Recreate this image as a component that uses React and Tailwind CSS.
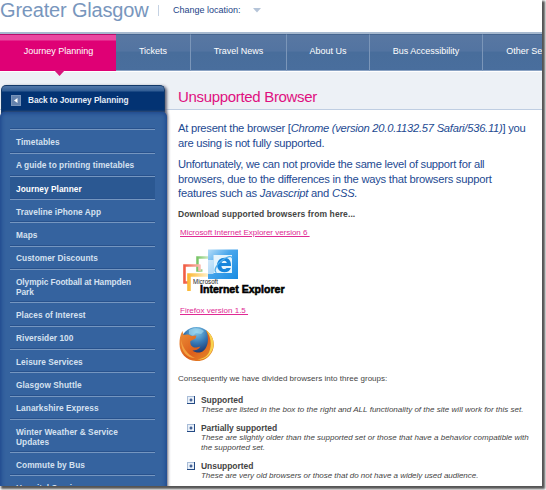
import React from "react";

const navItems = [
  { label: "Tickets", cls: "w-[75px]" },
  { label: "Travel News", cls: "w-[96px]" },
  { label: "About Us", cls: "w-[83px]" },
  { label: "Bus Accessibility", cls: "w-[113px]" },
  { label: "Other Services", cls: "w-[107px]" },
];

const sideItems = [
  ["Timetables"],
  ["A guide to printing timetables"],
  ["Journey Planner"],
  ["Traveline iPhone App"],
  ["Maps"],
  ["Customer Discounts"],
  ["Olympic Football at Hampden", "Park"],
  ["Places of Interest"],
  ["Riversider 100"],
  ["Leisure Services"],
  ["Glasgow Shuttle"],
  ["Lanarkshire Express"],
  ["Winter Weather & Service", "Updates"],
  ["Commute by Bus"],
  ["Hospital Services"],
];

const groups = [
  { title: "Supported", cls: "tracking-[0.020px]", lines: ["These are listed in the box to the right and ALL functionality of the site will work for this set."] },
  { title: "Partially supported", cls: "", lines: ["These are slightly older than the supported set or those that have a behavior compatible with", "the supported set."] },
  { title: "Unsupported", cls: "tracking-[-0.025px]", lines: ["These are very old browsers or those that do not have a widely used audience."] },
];

function ExplorerLogo() {
  return (
    <svg className="block h-[48px] w-[108px]" viewBox="0 0 108 48">
      <defs>
        <linearGradient id="ieBlue" x1="0" x2="1" y1="0" y2="1">
          <stop offset="0" stopColor="#b5ddf8" />
          <stop offset="0.4" stopColor="#4aa7ec" />
          <stop offset="1" stopColor="#188be2" />
        </linearGradient>
        <linearGradient id="ieYellow" gradientUnits="userSpaceOnUse" x1="7" x2="29" y1="0" y2="0">
          <stop offset="0" stopColor="#fbb62c" />
          <stop offset="1" stopColor="#fff3cf" />
        </linearGradient>
        <linearGradient id="ieRed" gradientUnits="userSpaceOnUse" x1="3" x2="21" y1="0" y2="0">
          <stop offset="0" stopColor="#f0553c" />
          <stop offset="1" stopColor="#fac4b8" />
        </linearGradient>
        <linearGradient id="ieGreen" gradientUnits="userSpaceOnUse" x1="16" x2="29" y1="0" y2="0">
          <stop offset="0" stopColor="#6fc05c" />
          <stop offset="1" stopColor="#d3edca" />
        </linearGradient>
      </defs>
      <path d="M28 9.500H17.500V22.500h5" fill="none" stroke="url(#ieGreen)" strokeWidth="2.500" />
      <path d="M20.500 17.500H4.500V34.500h4M19.500 17v6" fill="none" stroke="url(#ieRed)" strokeWidth="2.600" />
      <path d="M9 43V27h19" fill="none" stroke="url(#ieYellow)" strokeWidth="3.600" />
      <path d="M28 1.500h30v29.500H28z" fill="url(#ieBlue)" />
      <path d="M33.500 7h18.500v18H33.500z" fill="#e4f4fd" />
      <path d="M27.500 12h6v14h-6z" fill="#fff" opacity=".6" />
      <path d="M51 17.300c0-4.800-2.600-7.500-6.600-7.500-4.200 0-7.300 3.100-7.300 7.300s2.900 7.200 7.200 7.200c3.400 0 5.700-1.600 6.500-4.300h-4.200c-.5.700-1.200 1.100-2.200 1.100-1.800 0-2.900-1.200-3-3.100H51zm-9.500-2.200c.3-1.500 1.300-2.400 2.800-2.400s2.400.9 2.500 2.400z" fill="#1685dc" />
      <path d="M36.500 24.500c-3.500-1 0-8.500 6-12.500 5-3.700 9.500-4.700 9.500-1.700" fill="none" stroke="#53aeea" strokeWidth="1.300" />
      <text x="13" y="36" className="fill-[#222] font-['Liberation_Sans'] text-[6.500px]" textLength="25" lengthAdjust="spacingAndGlyphs">Microsoft</text>
      <text x="20" y="44.500" className="fill-black stroke-black font-['Liberation_Sans'] text-[11.500px] font-bold" strokeWidth=".6" textLength="84.500" lengthAdjust="spacingAndGlyphs">Internet Explorer</text>
    </svg>
  );
}

function FirefoxLogo() {
  return (
    <svg className="block h-[36px] w-[37px]" viewBox="0 0 37 36">
      <defs>
        <radialGradient id="globe" cx=".5" cy=".15" r=".7">
          <stop offset="0" stopColor="#83cbec" />
          <stop offset=".5" stopColor="#3678b4" />
          <stop offset="1" stopColor="#182f68" />
        </radialGradient>
        <linearGradient id="fox" x1="0" x2="1" y1="0" y2="1">
          <stop offset="0" stopColor="#ed9138" />
          <stop offset=".55" stopColor="#dc5f1c" />
          <stop offset="1" stopColor="#e9932c" />
        </linearGradient>
      </defs>
      <circle cx="18.500" cy="17" r="16" fill="url(#globe)" />
      <path d="M11 4c5-3 12-2 15 1l-3 3-5-1-3 3-4-2z" fill="#a6dcf1" opacity=".6" />
      <path d="M28 4c7 5 10 14 6 22-4 7-10 9.500-16 9C8 34.500 1.500 27 1.500 18c0-5 .5-9 3-13l1 4c3-1 6-.5 8 1l5-.5-1 3-5 2.500c-1 4 2 7 6 6.500l4-1c-2 3-5 4-8 4 5 4 12 2 14-4 2-4 2-11-.5-16.500z" fill="url(#fox)" />
      <path d="M28 4c8 6 9.500 15 5.500 21.500-3 6-9 8.500-14 8 7-1 11-4 12.500-10 2-7 0-14-4-19.500z" fill="#f8d24d" />
      <path d="M3 14c2 8 6 14 14 18-8 0-14-6-14-18z" fill="#f2a040" />
    </svg>
  );
}

function Bullet() {
  return (
    <svg className="mt-px block h-[8px] w-[8px] shrink-0" viewBox="0 0 8 8">
      <rect width="8" height="8" fill="#a9bdd8" />
      <path d="M0 7h7V0h1v8H0z" fill="#244a84" />
      <rect x="1" y="1" width="6" height="6" fill="#e9f0f8" />
      <path d="M2.500 4h3M4 2.500v3" stroke="#1c3f7d" strokeWidth="1.200" />
    </svg>
  );
}

export default function App() {
  return (
    <div className="h-[490px] w-[546px] overflow-hidden bg-white font-['Liberation_Sans',Arial,sans-serif]">
      <div className="relative h-[486px] w-[542px] bg-white shadow-[2px_2px_2px_1px_#555]">
        <div className="flex h-full w-full flex-col overflow-hidden">
          <header className="flex h-[32px] shrink-0 items-start whitespace-nowrap">
            <h1 className="w-[158px] text-[20px] leading-[20px] tracking-[-0.180px] text-[#7896bd]">Greater Glasgow</h1>
            <div className="mt-[5px] h-[11px] w-px bg-[#c5d2e3]" />
            <span className="ml-[14px] mt-[4px] w-[80px] text-[9px] leading-[12px] text-[#1d4488]">Change location:</span>
            <svg className="mt-[8px] h-[5px] w-[8px]" viewBox="0 0 8 5"><path d="M0 0h8L4 4.500z" fill="#b5c4d8" /></svg>
          </header>

          <nav className="flex h-[39px] shrink-0 whitespace-nowrap border-t-2 border-[#a7b9cf] text-[9px] leading-[33px] text-white">
            <div className="relative z-10 h-[37px] w-[116px] shrink-0 border-t border-[#b60c69] bg-[linear-gradient(#ea48a0_0,#ea48a0_5px,#df0075_6px,#df0075_100%)] pl-px text-center">
              Journey Planning
              <svg className="absolute left-[54px] top-[35px] h-[6px] w-[11px]" viewBox="0 0 11 6"><path d="M0 0h11L5.500 6z" fill="#d8137b" /></svg>
            </div>
            {navItems.map((n) => (
              <div key={n.label} className={`shrink-0 border-b border-t border-r border-b-[#8ba3c4] border-r-[#7b96b9] border-t-[#45658f] bg-[linear-gradient(#5877a2_0,#5374a1_45%,#486d9b_50%,#496e9d_100%)] text-center ${n.cls}`}>{n.label}</div>
            ))}
          </nav>

          <div className="flex min-h-0 flex-1 bg-[linear-gradient(#fff_0,#fff_1px,#edf1f6_1px,#edf1f6_38px,#bfcee2_38px,#bfcee2_39px,#fff_39px)]">
            <aside className="w-[170px] shrink-0 whitespace-nowrap pt-[14px]">
              <div className="ml-px flex h-[29px] w-[164px] rounded-t-[5px] border border-b-0 border-[#123969] bg-[linear-gradient(#537aab_0,#315d94_5px,#033373_6px,#033373_100%)] pl-[9px] pt-[9px] shadow-[2px_1px_3px_#667]">
                <svg className="h-[11px] w-[10px]" viewBox="0 0 10 11"><rect width="10" height="11" fill="#7893b8" /><rect x="1" y="1" width="8" height="9" fill="#6482ad" /><path d="M6.500 3v5L3 5.500z" fill="#fff" /></svg>
                <span className="ml-[7px] text-[8.300px] font-bold leading-[11px] tracking-[-0.060px] text-[#e5edf7]">Back to Journey Planning</span>
              </div>
              <div className="relative -mt-[2px] h-[400px] w-[167px] rounded-t-[5px] bg-[#35639f] px-[10px] pt-[17.300px] shadow-[inset_0_0_4px_1px_#1a438b,1px_0_3px_#667]">
                {sideItems.map((lines, i) => (
                  <div key={lines[0]} className={`w-[145px] border-t border-[#7596c0] pl-[6px] pt-[6.700px] text-[8.300px] font-bold leading-[10px] shadow-[0_-1px_0_#28528d] ${lines.length > 1 ? "h-[33.3px]" : "h-[23.3px]"} ${i === 6 ? "tracking-[-0.080px]" : "tracking-[0.050px]"} ${i === 2 ? "bg-[#2b5892] text-white" : "text-[#d5e1f0]"}`}>
                    {lines.map((l) => <div key={l}>{l}</div>)}
                  </div>
                ))}
              </div>
            </aside>

            <main className="min-w-0 flex-1 whitespace-nowrap pl-[8px] text-[#444]">
              <h2 className="pt-[17px] text-[15px] leading-[18px] tracking-[-0.320px] text-[#df1080]">Unsupported Browser</h2>
              <div className="mt-[15px] text-[11.200px] leading-[14.600px] tracking-[-0.200px] text-[#1d4a92]">
                <p><span className="tracking-[-0.255px]">At present the browser [<i>Chrome (version 20.0.1132.57 Safari/536.11)</i>] you</span><br /><span className="tracking-[-0.260px]">are using is not fully supported.</span></p>
                <p className="mt-[7px]"><span className="tracking-[-0.270px]">Unfortunately, we can not provide the same level of support for all</span><br /><span className="tracking-[-0.230px]">browsers, due to the differences in the ways that browsers support</span><br />features such as <i>Javascript</i> and <i>CSS.</i></p>
              </div>
              <p className="mt-[8px] text-[8.500px] font-bold leading-[11px] tracking-[0.100px]">Download supported browsers from here...</p>
              <p className="ml-[2px] mt-[8px] text-[8px] leading-[10px] tracking-[-0.030px] text-[#e02a94] underline">Microsoft Internet Explorer version 6&nbsp;</p>
              <div className="ml-[2px] mt-[10px]"><ExplorerLogo /></div>
              <p className="ml-[2px] mt-[10px] text-[8px] leading-[10px] text-[#e02a94] underline">Firefox version 1.5&nbsp;</p>
              <div className="mt-[10px]"><FirefoxLogo /></div>
              <p className="mt-[12px] text-[8px] leading-[10px] tracking-[0.030px]">Consequently we have divided browsers into three groups:</p>
              <ul className="mt-[11px] flex flex-col gap-[7.500px] pl-[9px]">
                {groups.map((g) => (
                  <li key={g.title} className="flex gap-[6px]">
                    <Bullet />
                    <div className="text-[8px] leading-[10.200px]">
                      <div className="text-[8.500px] font-bold tracking-[-0.050px]">{g.title}</div>
                      {g.lines.map((l) => <div key={l} className={`italic ${g.cls}`}>{l}</div>)}
                    </div>
                  </li>
                ))}
              </ul>
            </main>
          </div>
        </div>
      </div>
    </div>
  );
}
